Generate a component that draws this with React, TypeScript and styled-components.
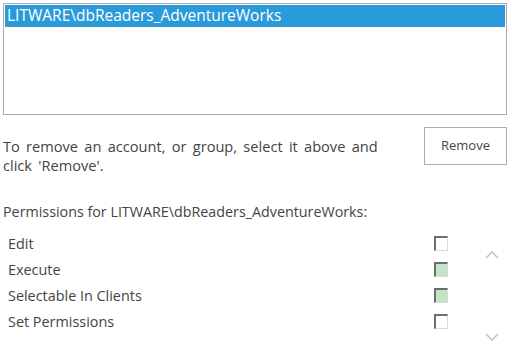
import React from "react";
import styled, { createGlobalStyle } from "styled-components";

const Global = createGlobalStyle`
  html, body { margin: 0; padding: 0; background: #fff; }
  body { font-family: "Open Sans", "Noto Sans", sans-serif; color: #444; }
`;

const Page = styled.div`
  width: 512px;
  height: 348px;
  box-sizing: border-box;
  padding: 3px 5px 0 3px;
  display: flex;
  flex-direction: column;
  overflow: hidden;
`;

const ListBox = styled.div`
  height: 112px;
  box-sizing: border-box;
  border: 1px solid #ababab;
  padding: 1px;
  display: flex;
  flex-direction: column;
`;

const ListItem = styled.div<{ $selected?: boolean }>`
  height: 22px;
  line-height: 21px;
  padding-left: 2px;
  font-size: 15.5px;
  background: ${(p) => (p.$selected ? "#2a9ad9" : "transparent")};
  color: ${(p) => (p.$selected ? "#fff" : "#444")};
`;

const RemoveRow = styled.div`
  display: flex;
  justify-content: space-between;
  align-items: flex-start;
  margin-top: 12px;
`;

const Hint = styled.div`
  font-size: 14.6px;
  word-spacing: 2.5px;
  line-height: 19px;
  margin-top: 10px;
  width: 396px;
`;

const Button = styled.button`
  width: 83px;
  height: 38px;
  box-sizing: border-box;
  border: 1px solid #ababab;
  background: #fff;
  color: #444;
  font-family: inherit;
  font-size: 13px;
  padding: 0 0 2px;
`;

const PermTitle = styled.div`
  font-size: 14.3px;
  line-height: 19px;
  margin-top: 27px;
`;

const PermArea = styled.div`
  display: flex;
  margin-top: 9px;
`;

const PermList = styled.div`
  flex: 1;
  display: flex;
  flex-direction: column;
`;

const PermRow = styled.div`
  height: 26px;
  display: flex;
  align-items: center;
  padding-left: 5px;
  padding-right: 29px;
  justify-content: space-between;
  font-size: 14.4px;
`;

const Check = styled.span<{ $on?: boolean }>`
  width: 14px;
  height: 15px;
  box-sizing: border-box;
  border-top: 2px solid #6e6e6e;
  border-left: 2px solid #6e6e6e;
  border-right: 1px solid #dadada;
  border-bottom: 1px solid #dadada;
  background: ${(p) => (p.$on ? "#c5e4c5" : "#fff")};
`;

const Scroller = styled.div`
  width: 30px;
  height: 117px;
  box-sizing: border-box;
  display: flex;
  flex-direction: column;
  justify-content: space-between;
  align-items: center;
  padding: 20px 0 5px;
`;

const Chevron = ({ up }: { up?: boolean }) => (
  <svg width="14" height="9" viewBox="0 0 14 9">
    <path
      d={up ? "M1 8 L7 2 L13 8" : "M1 1 L7 7 L13 1"}
      fill="none"
      stroke="#c4c4c4"
      strokeWidth="1.6"
    />
  </svg>
);

const perms = [
  { name: "Edit", on: false },
  { name: "Execute", on: true },
  { name: "Selectable In Clients", on: true },
  { name: "Set Permissions", on: false },
];

export default function App() {
  return (
    <>
      <Global />
      <Page>
        <ListBox>
          <ListItem $selected>LITWARE\dbReaders_AdventureWorks</ListItem>
        </ListBox>
        <RemoveRow>
          <Hint>To remove an account, or group, select it above and click 'Remove'.</Hint>
          <Button>Remove</Button>
        </RemoveRow>
        <PermTitle>Permissions for LITWARE\dbReaders_AdventureWorks:</PermTitle>
        <PermArea>
          <PermList>
            {perms.map((p) => (
              <PermRow key={p.name}>
                <span>{p.name}</span>
                <Check $on={p.on} />
              </PermRow>
            ))}
          </PermList>
          <Scroller>
            <Chevron up />
            <Chevron />
          </Scroller>
        </PermArea>
      </Page>
    </>
  );
}
